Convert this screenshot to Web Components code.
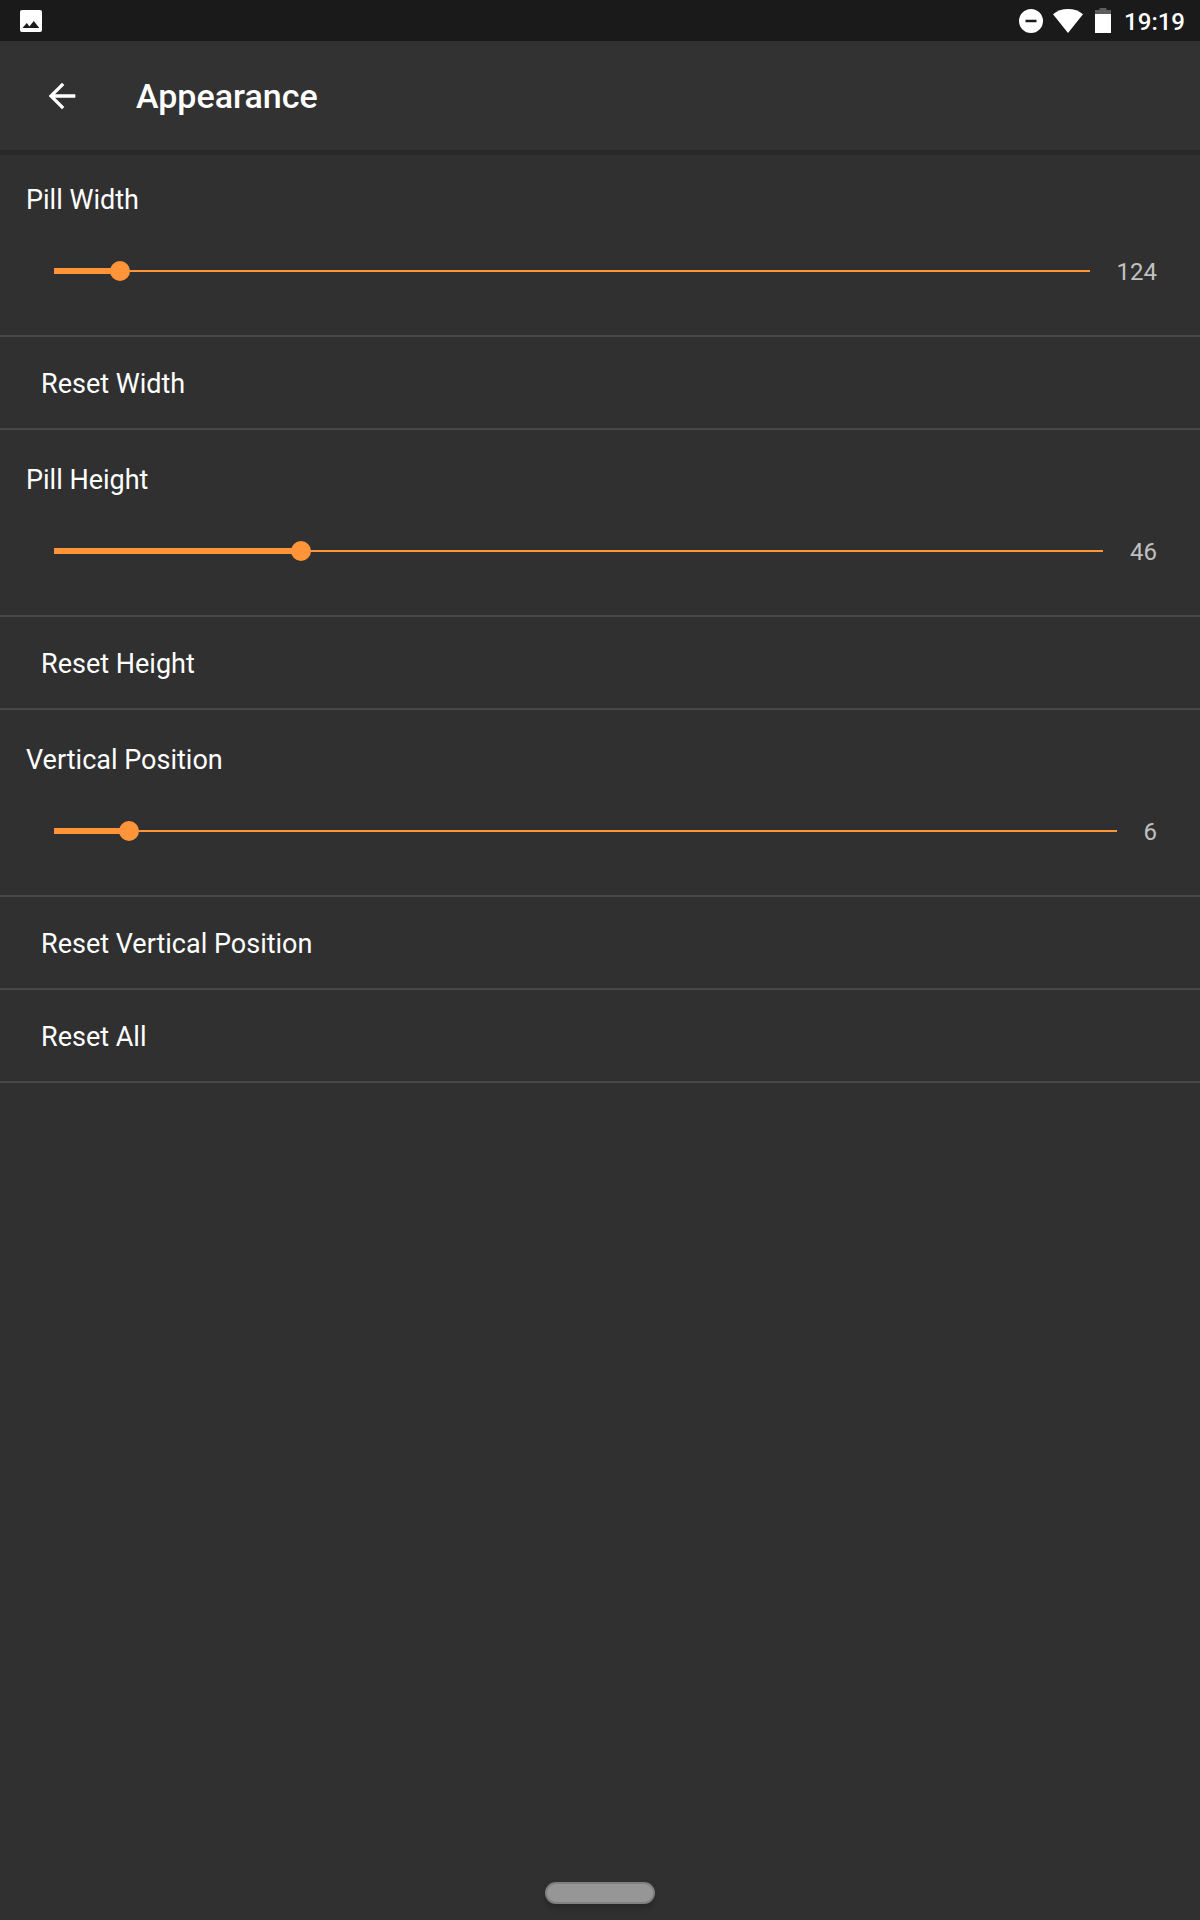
<!DOCTYPE html>
<html lang="en">
<head>
<meta charset="utf-8">
<meta name="viewport" content="width=device-width, initial-scale=1">
<title>Appearance</title>
<style>
  :root {
    --bg: #303030;
    --bar: #323232;
    --status: #1a1a1a;
    --divider: #484848;
    --accent: #ff9538;
    --muted: #c1c1c1;
  }
  body { margin: 0; background: var(--bg); color: #fff; font: 400 27px/32px Roboto, sans-serif; }
</style>
</head>
<body>
<settings-screen>
  <status-bar slot="top" time="19:19"></status-bar>
  <app-bar slot="top">Appearance</app-bar>
  <slider-setting label="Pill Width" min="10" max="1800" value="124"></slider-setting>
  <action-row>Reset Width</action-row>
  <slider-setting label="Pill Height" min="10" max="163" value="46"></slider-setting>
  <action-row>Reset Height</action-row>
  <slider-setting label="Vertical Position" min="0" max="85" value="6"></slider-setting>
  <action-row>Reset Vertical Position</action-row>
  <action-row>Reset All</action-row>
  <nav-pill slot="bottom"></nav-pill>
</settings-screen>

<script>
  class BaseElement extends HTMLElement {
    constructor() {
      super();
      this.attachShadow({ mode: 'open' });
    }
    connectedCallback() {
      this.shadowRoot.innerHTML = '<style>*{box-sizing:border-box}</style>' + this.render();
      this.ready();
    }
    ready() {}
  }

  customElements.define('settings-screen', class extends BaseElement {
    render() {
      return `
        <style>
          :host { display: flex; flex-direction: column; min-height: 100vh; }
          main { flex: 1; }
        </style>
        <slot name="top"></slot>
        <main><slot></slot></main>
        <slot name="bottom"></slot>`;
    }
  });

  customElements.define('status-bar', class extends BaseElement {
    render() {
      return `
        <style>
          :host { display: flex; justify-content: space-between; align-items: center; height: 41px;
                  padding: 0 15px 0 20px; background: var(--status); }
          .system { display: flex; align-items: center; gap: 10px; }
          svg { display: block; fill: #fff; }
          time { font-size: 24px; font-weight: 500; padding: 2px 0 0 3px; }
          .battery { margin-left: 2px; }
        </style>
        <svg width="22" height="22" viewBox="0 0 22 22" aria-label="Screenshot saved" role="img">
          <path fill-rule="evenodd" d="M2 0h18a2 2 0 0 1 2 2v18a2 2 0 0 1-2 2H2a2 2 0 0 1-2-2V2a2 2 0 0 1 2-2zM2.500 18h16.800l-5.500-7-4.400 5.400L6.800 13z"/>
        </svg>
        <div class="system">
          <svg width="24" height="24" viewBox="0 0 24 24" aria-label="Do not disturb" role="img">
            <path fill-rule="evenodd" d="M12 0a12 12 0 1 1 0 24a12 12 0 0 1 0-24zM6.500 10.800v2.400h11v-2.400z"/>
          </svg>
          <svg width="30" height="24" viewBox="0 0 30 24" aria-label="Wi-Fi" role="img">
            <path d="M15 24L0 5.200C4 1.900 9.200 0 15 0s11 1.900 15 5.200z"/>
          </svg>
          <svg class="battery" width="16" height="25" viewBox="0 0 16 25" aria-label="Battery" role="img">
            <path fill="#5c5c5c" d="M4.500 0h7v2H16v4H0V2h4.500z"/>
            <path d="M0 6h16v19H0z"/>
          </svg>
          <time>${this.getAttribute('time')}</time>
        </div>`;
    }
  });

  customElements.define('app-bar', class extends BaseElement {
    render() {
      return `
        <style>
          :host { display: flex; align-items: center; gap: 54px; height: 109px; padding: 1px 42px 0; box-sizing: border-box;
                  background: var(--bar); box-shadow: 0 5px 0 #292929; }
          button { display: block; padding: 0; border: 0; background: none; color: inherit; }
          svg { display: block; fill: currentColor; }
          h1 { margin: 0; font-size: 34px; line-height: 40px; font-weight: 500; }
        </style>
        <button type="button" aria-label="Back">
          <svg width="40" height="40" viewBox="0 0 24 24"><path d="M20 11H7.830l5.590-5.590L12 4l-8 8 8 8 1.410-1.410L7.830 13H20z"/></svg>
        </button>
        <h1><slot></slot></h1>`;
    }
  });

  customElements.define('slider-setting', class extends BaseElement {
    render() {
      const a = n => this.getAttribute(n);
      return `
        <style>
          :host { display: flex; flex-direction: column; gap: 38px; height: 187px; padding: 34px 43px 0 26px;
                  border-bottom: 2px solid var(--divider); box-sizing: border-box; }
          .row { display: flex; align-items: center; gap: 17px; padding-left: 18px; }
          output { padding-top: 2px; color: var(--muted); font-size: 24px; }
          input { -webkit-appearance: none; appearance: none; flex: 1; min-width: 0; height: 20px; margin: 0; background: none; }
          input::-webkit-slider-runnable-track {
            height: 20px;
            box-sizing: border-box;
            padding: 0;
            background:
              linear-gradient(var(--accent), var(--accent)) 10px 50% / calc((100% - 20px) * var(--fraction)) 6px no-repeat,
              linear-gradient(var(--accent), var(--accent)) 50% 50% / calc(100% - 20px) 2px no-repeat;
          }
          input::-webkit-slider-thumb { -webkit-appearance: none; width: 20px; height: 20px; border-radius: 50%; background: var(--accent); }
        </style>
        <label for="range">${a('label')}</label>
        <div class="row">
          <input id="range" type="range" min="${a('min')}" max="${a('max')}" value="${a('value')}">
          <output for="range">${a('value')}</output>
        </div>`;
    }
    ready() {
      const input = this.shadowRoot.querySelector('input');
      const output = this.shadowRoot.querySelector('output');
      const update = () => {
        input.style.setProperty('--fraction', (input.value - input.min) / (input.max - input.min));
        output.textContent = input.value;
      };
      input.addEventListener('input', update);
      update();
    }
  });

  customElements.define('action-row', class extends BaseElement {
    render() {
      return `
        <style>
          :host { display: block; border-bottom: 2px solid var(--divider); }
          button { display: block; width: 100%; height: 91px; padding: 2px 41px 0; border: 0; background: none;
                   color: inherit; font: inherit; text-align: left; }
        </style>
        <button type="button"><slot></slot></button>`;
    }
  });

  customElements.define('nav-pill', class extends BaseElement {
    render() {
      return `
        <style>
          :host { display: flex; justify-content: center; padding-bottom: 16px; }
          button { width: 110px; height: 22px; padding: 0; border: 2px solid #808080; border-radius: 11px;
                   background: #969696; box-shadow: 0 4px 6px rgba(0, 0, 0, .2); }
        </style>
        <button type="button" aria-label="Home"></button>`;
    }
  });
</script>
</body>
</html>
